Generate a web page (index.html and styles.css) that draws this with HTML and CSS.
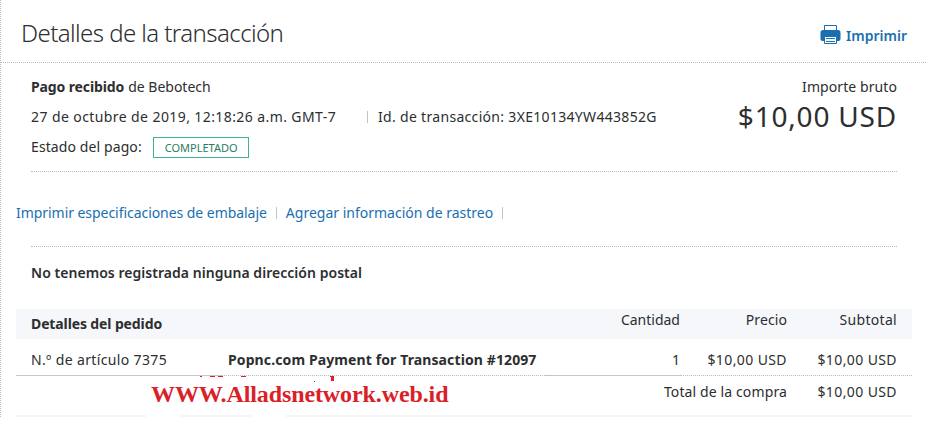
FILE: index.html
```html
<!DOCTYPE html>
<html lang="es">
<head>
    <meta charset="UTF-8">
    <meta name="viewport" content="width=device-width, initial-scale=1.0">
    <title>Detalles de la transacción</title>
    <link rel="stylesheet" href="styles.css">
</head>
<body>
    <main class="page">
        <header class="header">
            <h1 class="title">Detalles de la transacción</h1>
            <a class="print" href="#">
                <svg width="21" height="21" viewBox="0 0 21 21">
                    <path d="M4.500 6V1.500h12V6" fill="#fff" stroke="#1a6fb0"/>
                    <path d="M3 6h15a2.500 2.500 0 0 1 2.500 2.500V15a2 2 0 0 1-2 2h-16a2 2 0 0 1-2-2V8.500A2.500 2.500 0 0 1 3 6z" fill="#1a6fb0"/>
                    <path d="M4.500 12.500h12v7h-12z" fill="#fff" stroke="#1a6fb0"/>
                    <path d="M6 14.500h9M6 17.500h9" stroke="#1a6fb0"/>
                </svg>
                <span>Imprimir</span>
            </a>
        </header>

        <section class="summary">
            <div class="info">
                <p><b class="received">Pago recibido</b><span>de Bebotech</span></p>
                <p>
                    <span class="date">27 de octubre de 2019, 12:18:26 a.m. GMT-7</span>
                    <i class="bar"></i>
                    <span class="txn">Id. de transacción: 3XE10134YW443852G</span>
                </p>
                <p><span class="state">Estado del pago:</span><span class="badge">COMPLETADO</span></p>
            </div>
            <div class="gross">
                <p class="gross-label">Importe bruto</p>
                <p class="amount">$10,00 USD</p>
            </div>
        </section>

        <nav class="links">
            <a class="packing" href="#">Imprimir especificaciones de embalaje</a>
            <i class="bar"></i>
            <a href="#">Agregar información de rastreo</a>
            <i class="bar"></i>
        </nav>

        <h2 class="address">No tenemos registrada ninguna dirección postal</h2>

        <section class="order">
            <div class="row head">
                <b class="order-title">Detalles del pedido</b>
                <span class="num">Cantidad</span>
                <span class="num price">Precio</span>
                <span class="num subtotal">Subtotal</span>
            </div>
            <div class="row item">
                <span class="article">N.º de artículo 7375</span>
                <b class="product">Popnc.com Payment for Transaction #12097</b>
                <span class="num">1</span>
                <span class="num money">$10,00 USD</span>
                <span class="num money">$10,00 USD</span>
            </div>
            <div class="rule">
                <i></i><i class="dotted"></i><i></i><i class="dotted"></i>
            </div>
            <div class="row total">
                <div class="stamp">
                    <svg class="marks" width="144" height="6" viewBox="0 0 144 6" fill="#da2128">
                        <path d="M8 0h2v1H8zM18 0h5v1h-5zM26 0h5v1h-5zM49 0h5v1h-5zM138 0h4v5h-3V1h-1zM122 5h1v1h-1z"/>
                    </svg>
                    <strong class="site">WWW.Alladsnetwork.web.id</strong>
                </div>
                <span class="num total-label">Total de la compra</span>
                <span class="num money">$10,00 USD</span>
            </div>
            <div class="end">
                <i></i><i></i><i></i>
            </div>
        </section>
    </main>
</body>
</html>
```
FILE: styles.css
```css
:root {
    --text: #2c2e2f;
    --link: #1a6fb0;
    --line: #b7bcbf;
    --soft: #f5f7fa;
}

* {
    box-sizing: border-box;
}

body {
    margin: 0;
    background: #fff;
    color: var(--text);
    font-family: "Noto Sans", sans-serif;
    font-size: 14px;
}

p, h1, h2 {
    margin: 0;
}

a {
    color: var(--link);
    text-decoration: none;
}

b {
    font-weight: 700;
}

.page {
    height: 417px;
    border-left: 1px dotted var(--line);
}

.header {
    display: flex;
    justify-content: space-between;
    height: 63px;
    padding: 0 19px 0 20px;
    border-bottom: 1px dotted var(--line);
}

.title {
    font-size: 24px;
    font-weight: 300;
    line-height: 66px;
    letter-spacing: -0.57px;
}

.print {
    display: flex;
    gap: 5px;
    padding-top: 24px;
    font-weight: 600;
    line-height: 24px;
}

.summary {
    display: flex;
    justify-content: space-between;
    height: 109px;
    margin: 0 29px 0 30px;
    padding-top: 9px;
    line-height: 30px;
    border-bottom: 1px dotted var(--line);
}

.info p {
    display: flex;
    align-items: center;
    height: 30px;
}

.received {
    margin-right: 4px;
    letter-spacing: -0.12px;
}

.date {
    margin-right: 31px;
    letter-spacing: 0.41px;
}

.txn {
    margin-left: 10px;
    letter-spacing: 0.31px;
}

.state {
    margin-right: 11px;
    letter-spacing: 0.1px;
}

.bar {
    width: 1px;
    height: 12px;
    background: #bcc6c6;
}

.badge {
    height: 21px;
    padding: 0 10px 0 11px;
    border: 1px solid #3fb199;
    color: #2a7d5f;
    font-size: 11px;
    line-height: 20px;
}

.gross {
    text-align: right;
}

.gross-label {
    letter-spacing: 0.08px;
}

.amount {
    font-size: 28px;
    line-height: 28px;
    letter-spacing: 0.8px;
}

.links {
    display: flex;
    align-items: center;
    gap: 9px;
    height: 74px;
    padding: 8px 0 0 15px;
}

.links a {
    margin-top: -2px;
}

.packing {
    letter-spacing: -0.05px;
}

.address {
    height: 63px;
    margin: 0 29px 0 30px;
    border-top: 1px dotted var(--line);
    font-size: 14px;
    font-weight: 600;
    line-height: 52px;
    letter-spacing: 0.04px;
}

.order {
    margin: 0 14px 0 15px;
}

.row {
    display: grid;
    grid-template-columns: 197px 341px 111px 107px 110px;
    padding: 0 15px;
}

.num {
    text-align: right;
}

.head {
    height: 30px;
    background: var(--soft);
    line-height: 22px;
}

.order-title {
    grid-column: span 2;
    line-height: 30px;
    letter-spacing: -0.12px;
}

.price {
    letter-spacing: 0.1px;
}

.subtotal {
    letter-spacing: 0.3px;
}

.item {
    height: 36px;
    line-height: 41px;
}

.article {
    letter-spacing: 0.36px;
}

.product {
    letter-spacing: 0.11px;
}

.money {
    letter-spacing: 0.4px;
}

.rule {
    display: grid;
    grid-template-columns: 206px 323px 136px 1fr;
}

.rule i {
    border-top: 1px solid #c4c6c8;
}

.rule .dotted {
    border-top-style: dotted;
    border-top-color: var(--line);
}

.total {
    height: 39px;
    line-height: 32px;
}

.stamp {
    display: flex;
    flex-direction: column;
    grid-column: span 2;
    padding-left: 120px;
}

.marks {
    margin-left: 41px;
}

.site {
    color: #da2128;
    font-family: "Liberation Serif", serif;
    font-size: 24px;
    line-height: 24px;
    letter-spacing: -0.1px;
}

.total-label {
    grid-column: span 2;
    letter-spacing: 0.12px;
}

.end {
    display: grid;
    grid-template-columns: 130px 70px 1fr;
    column-gap: 35px;
}

.end i {
    height: 2px;
    background: #f5f5f6;
}
```
